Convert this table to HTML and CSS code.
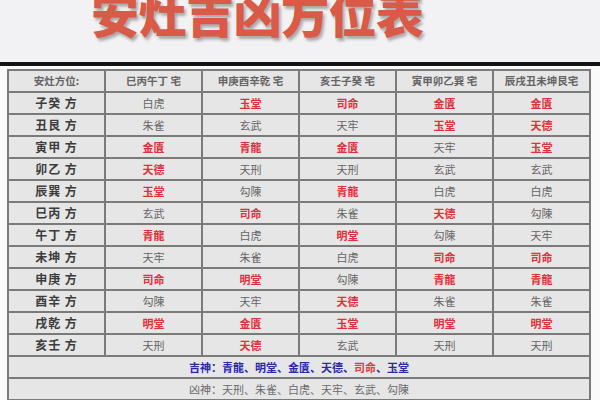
FILE: index.html
```html
<!DOCTYPE html>
<html lang="zh">
<head>
<meta charset="utf-8">
<link rel="stylesheet" href="styles.css">
</head>
<body>
<div class="banner"><h1 class="title">安灶吉凶方位表</h1></div>
<div class="bar"></div>
<div class="wrap">
<table class="grid">
<thead>
<tr><th>安灶方位:</th><th>巳丙午丁 宅</th><th>申庚酉辛乾 宅</th><th>亥壬子癸 宅</th><th>寅甲卯乙巽 宅</th><th>辰戌丑未坤艮宅</th></tr>
</thead>
<tbody>
<tr><td class="lab">子癸 方</td><td>白虎</td><td class="r">玉堂</td><td class="r">司命</td><td class="r">金匱</td><td class="r">金匱</td></tr>
<tr><td class="lab">丑艮 方</td><td>朱雀</td><td>玄武</td><td>天牢</td><td class="r">玉堂</td><td class="r">天德</td></tr>
<tr><td class="lab">寅甲 方</td><td class="r">金匱</td><td class="r">青龍</td><td class="r">金匱</td><td>天牢</td><td class="r">玉堂</td></tr>
<tr><td class="lab">卯乙 方</td><td class="r">天德</td><td>天刑</td><td>天刑</td><td>玄武</td><td>玄武</td></tr>
<tr><td class="lab">辰巽 方</td><td class="r">玉堂</td><td>勾陳</td><td class="r">青龍</td><td>白虎</td><td>白虎</td></tr>
<tr><td class="lab">巳丙 方</td><td>玄武</td><td class="r">司命</td><td>朱雀</td><td class="r">天德</td><td>勾陳</td></tr>
<tr><td class="lab">午丁 方</td><td class="r">青龍</td><td>白虎</td><td class="r">明堂</td><td>勾陳</td><td>天牢</td></tr>
<tr><td class="lab">未坤 方</td><td>天牢</td><td>朱雀</td><td>白虎</td><td class="r">司命</td><td class="r">司命</td></tr>
<tr><td class="lab">申庚 方</td><td class="r">司命</td><td class="r">明堂</td><td>勾陳</td><td class="r">青龍</td><td class="r">青龍</td></tr>
<tr><td class="lab">酉辛 方</td><td>勾陳</td><td>天牢</td><td class="r">天德</td><td>朱雀</td><td>朱雀</td></tr>
<tr><td class="lab">戌乾 方</td><td class="r">明堂</td><td class="r">金匱</td><td class="r">玉堂</td><td class="r">明堂</td><td class="r">明堂</td></tr>
<tr><td class="lab">亥壬 方</td><td>天刑</td><td class="r">天德</td><td>玄武</td><td>天刑</td><td>天刑</td></tr>
<tr><td colspan="6" class="good">吉神：青龍、明堂、金匱、天德、<span class="rs">司命</span>、玉堂</td></tr>
<tr><td colspan="6" class="bad">凶神：天刑、朱雀、白虎、天牢、玄武、勾陳</td></tr>
</tbody>
</table>
</div>
</body>
</html>
```
FILE: styles.css
```css
html, body {
  margin: 0;
  padding: 0;
  background: #fafafa;
  overflow: hidden;
}
body {
  width: 600px;
  height: 400px;
  font-family: "Noto Sans CJK TC", "Noto Sans CJK SC", sans-serif;
}
.banner {
  height: 62px;
  background: #f2f2f4;
  overflow: hidden;
}
.title {
  margin: -18px 0 0 0;
  padding-left: 91px;
  font-family: "Noto Sans CJK SC", sans-serif;
  font-size: 48px;
  line-height: 60px;
  font-weight: 900;
  color: #d85a47;
  letter-spacing: -0.5px;
  text-shadow: 2px 3px 3px rgba(0, 0, 0, 0.3);
}
.bar {
  height: 4px;
  background: #141414;
}
.wrap {
  padding: 3px 9px 0 7px;
}
.grid {
  width: 584px;
  table-layout: fixed;
  border-collapse: collapse;
  border: 2px solid #6d6d6d;
  background: #e6e6e6;
}
.grid th, .grid td {
  height: 20px;
  padding: 0;
  border: 2px solid #7a7a7a;
  text-align: center;
  font-size: 11px;
  line-height: 20px;
  color: #646464;
  white-space: nowrap;
  overflow: hidden;
}
.grid th {
  font-weight: 700;
  color: #646464;
  font-size: 10.5px;
}
.grid td.lab {
  font-weight: 700;
  color: #3c3c3c;
  font-size: 12px;
  letter-spacing: 1px;
}
.grid td.r {
  color: #e0303a;
  font-weight: 700;
}
.grid td.good {
  color: #2a2aa8;
  font-weight: 700;
}
.grid td.good .rs {
  color: #e03a44;
}
.grid td.bad {
  color: #6a6a6a;
}
```
